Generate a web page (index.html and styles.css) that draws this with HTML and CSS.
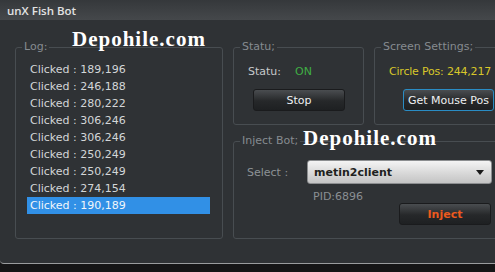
FILE: index.html
```html
<!DOCTYPE html>
<html lang="en">
<head>
  <meta name="viewport" content="width=device-width, initial-scale=1">
  <title>unX Fish Bot</title>
  <link rel="stylesheet" href="styles.css">
</head>
<body>
  <div class="window">
    <div class="titlebar">unX Fish Bot</div>

    <div class="content">
      <fieldset class="group log">
        <legend>Log:</legend>
        <ul class="log-list">
          <li>Clicked : 189,196</li>
          <li>Clicked : 246,188</li>
          <li>Clicked : 280,222</li>
          <li>Clicked : 306,246</li>
          <li>Clicked : 306,246</li>
          <li>Clicked : 250,249</li>
          <li>Clicked : 250,249</li>
          <li>Clicked : 274,154</li>
          <li class="selected">Clicked : 190,189</li>
        </ul>
      </fieldset>

      <div class="right">
        <fieldset class="group statu">
          <legend>Statu;</legend>
          <div class="status-row">
            <span>Statu:</span>
            <span class="on">ON</span>
          </div>
          <button class="btn stop">Stop</button>
        </fieldset>

        <fieldset class="group screen">
          <legend>Screen Settings;</legend>
          <div class="circle">Circle Pos: 244,217</div>
          <button class="btn mouse">Get Mouse Pos</button>
        </fieldset>

        <fieldset class="group inject">
          <legend>Inject Bot;</legend>
          <div class="select-row">
            <span class="select-label">Select :</span>
            <div class="combo">
              <span>metin2client</span>
              <span class="arrow"></span>
            </div>
          </div>
          <div class="pid">PID:6896</div>
          <div class="inject-row">
            <button class="btn inject-btn">Inject</button>
          </div>
        </fieldset>
      </div>
    </div>

    <div class="mark mark-top">Depohile.com</div>
    <div class="mark mark-mid">Depohile.com</div>
  </div>
</body>
</html>
```

FILE: styles.css
```css
body {
  margin: 0;
  width: 495px;
  height: 272px;
  overflow: hidden;
  background: #151516;
  font-family: "DejaVu Sans", sans-serif;
  font-size: 11px;
}
.window {
  position: relative;
  height: 263px;
  background: #2f3235;
  border-bottom: 1px solid #9a9c9e;
  border-bottom-left-radius: 4px;
  overflow: hidden;
}
.titlebar {
  height: 20px;
  line-height: 21px;
  padding-left: 7px;
  background: linear-gradient(#35383b, #45484b);
  color: #e2e2e2;
  font-weight: 600;
  font-family: "Open Sans", sans-serif;
  font-size: 11.5px;
}
.content {
  display: flex;
  gap: 10px;
  padding: 21px 0 0 15px;
}
.group {
  margin: 0;
  padding: 0;
  min-width: 0;
  border: 1px solid #484d51;
  border-radius: 3px;
  box-sizing: border-box;
}
.group legend {
  margin-left: 6px;
  padding: 0 2px;
  line-height: 12px;
  color: #868b90;
}
.log {
  width: 208px;
  height: 198px;
  flex: none;
}
.log-list {
  list-style: none;
  margin: 8px 0 0 11px;
  padding: 0;
  width: 183px;
}
.log-list li {
  height: 17px;
  line-height: 17px;
  padding-left: 3px;
  color: #d3d6d8;
}
.log-list li.selected {
  background: #3190e6;
  color: #f2f6fa;
}
.right {
  display: grid;
  grid-template-columns: 131px 136px;
  grid-template-rows: 84px 104px;
  gap: 10px;
}
.statu, .screen {
  height: 84px;
}
.inject {
  grid-column: 1 / 3;
  height: 104px;
}
.status-row {
  display: flex;
  gap: 14px;
  margin: 12px 0 0 14px;
  line-height: 14px;
  color: #c6c9cb;
}
.on {
  color: #3fae44;
}
.btn {
  display: block;
  height: 22px;
  padding: 0;
  border: 1px solid #1a1b1d;
  border-radius: 3px;
  background: linear-gradient(#4a4d50, #26282a 55%, #1e2022);
  color: #eef0f2;
  font-family: "DejaVu Sans", sans-serif;
  font-size: 11px;
}
.stop {
  width: 92px;
  margin: 10px 0 0 19px;
}
.circle {
  margin: 12px 0 0 14px;
  line-height: 14px;
  color: #d9c72a;
  letter-spacing: -0.2px;
  white-space: nowrap;
}
.mouse {
  width: 91px;
  margin: 10px 0 0 28px;
  border-color: #2a8cc4;
  white-space: nowrap;
}
.select-row {
  display: flex;
  align-items: center;
  margin: 13px 0 0 13px;
}
.select-label {
  width: 60px;
  color: #8d9296;
}
.combo {
  display: flex;
  align-items: center;
  justify-content: space-between;
  width: 185px;
  height: 24px;
  padding: 0 6px;
  box-sizing: border-box;
  border: 1px solid #8c8e90;
  border-radius: 3px;
  background: linear-gradient(#f4f4f4, #d6d6d6 60%, #c4c4c4);
  color: #1e1f20;
  font-weight: 600;
}
.arrow {
  width: 0;
  height: 0;
  border-left: 4px solid transparent;
  border-right: 4px solid transparent;
  border-top: 5px solid #1a1a1a;
  margin-right: 1px;
}
.pid {
  margin: 6px 0 0 79px;
  line-height: 14px;
  color: #8a8f93;
}
.inject-row {
  display: flex;
  justify-content: flex-end;
  padding-right: 18px;
  margin-top: -1px;
}
.inject-btn {
  width: 92px;
  color: #ec5a1e;
  font-weight: bold;
}
.mark {
  position: absolute;
  color: #ffffff;
  font-family: "Liberation Serif", serif;
  font-weight: bold;
  font-size: 21px;
  letter-spacing: 1px;
  line-height: 21px;
}
.mark-top {
  left: 72px;
  top: 29px;
}
.mark-mid {
  left: 303px;
  top: 128px;
}
```
